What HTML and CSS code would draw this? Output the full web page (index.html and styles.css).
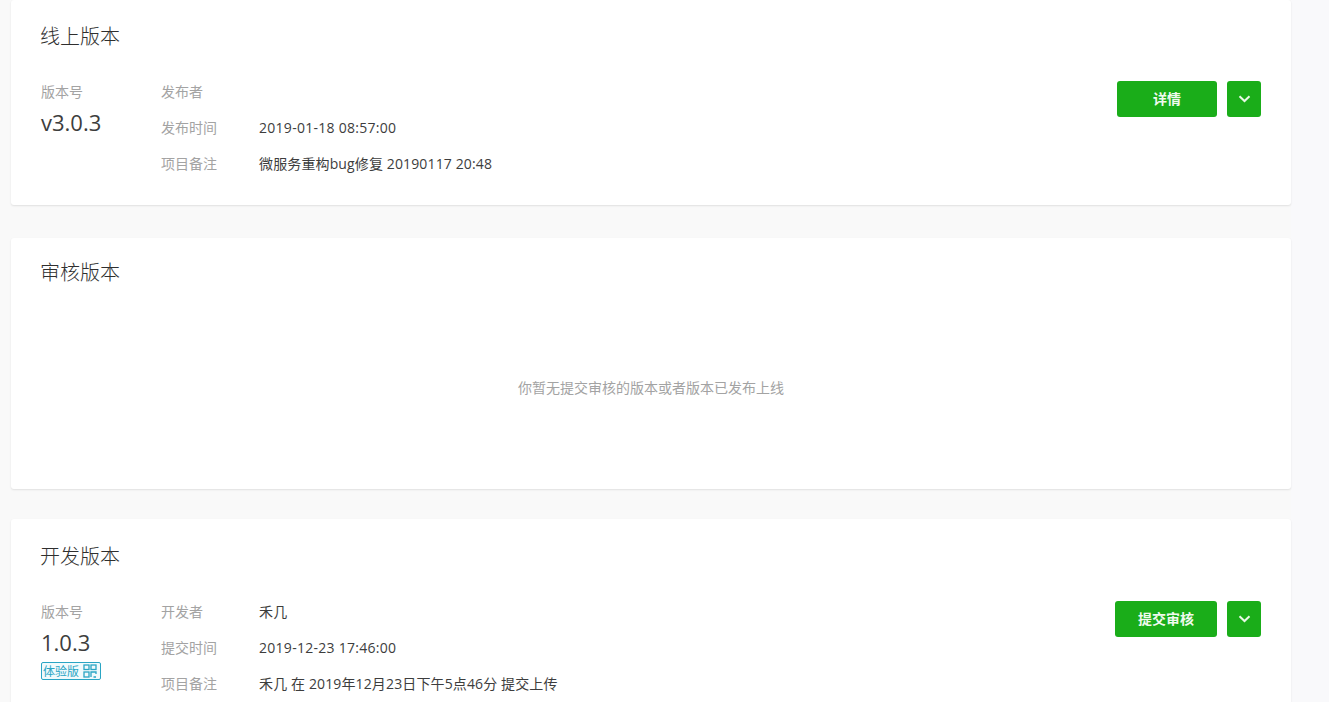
FILE: index.html
```html
<!DOCTYPE html>
<html lang="zh-CN">
<head>
    <meta charset="UTF-8">
    <meta name="viewport" content="width=device-width, initial-scale=1.0">
    <title>版本管理</title>
    <link rel="stylesheet" href="styles.css">
</head>
<body>

    <div class="page">
        <!-- 线上版本 -->
        <div class="card card-online">
            <h3 class="card-title">线上版本</h3>
            <div class="version-row">
                <div class="version-main">
                    <div class="version-label">版本号</div>
                    <div class="version-number">v3.0.3</div>
                </div>
                <div class="version-info">
                    <div class="info-row"><span class="info-label">发布者</span><span class="info-value"></span></div>
                    <div class="info-row"><span class="info-label">发布时间</span><span class="info-value info-date">2019-01-18 08:57:00</span></div>
                    <div class="info-row"><span class="info-label">项目备注</span><span class="info-value">微服务重构bug修复 20190117 20:48</span></div>
                </div>
                <div class="version-actions">
                    <button class="btn btn-main">详情</button>
                    <button class="btn btn-more" aria-label="更多">
                        <svg width="13" height="8" viewBox="0 0 13 8"><path d="M1.500 1.200 L6.500 6 L11.500 1.200" fill="none" stroke="#e8f8e6" stroke-width="2"/></svg>
                    </button>
                </div>
            </div>
        </div>

        <!-- 审核版本 -->
        <div class="card card-review">
            <h3 class="card-title">审核版本</h3>
            <p class="empty-text">你暂无提交审核的版本或者版本已发布上线</p>
        </div>

        <!-- 开发版本 -->
        <div class="card card-dev">
            <h3 class="card-title">开发版本</h3>
            <div class="version-row">
                <div class="version-main">
                    <div class="version-label">版本号</div>
                    <div class="version-number version-number-dev">1.0.3</div>
                    <span class="trial-tag">体验版
                        <svg class="qr-icon" width="14" height="14" viewBox="0 0 14 14" fill="none" stroke="#2aa5c4" stroke-width="1.300">
                            <rect x="1" y="1" width="5" height="4.500"/>
                            <rect x="8" y="1" width="5" height="4.500"/>
                            <rect x="1" y="8" width="5" height="5"/>
                            <path d="M8 13V8h5v2M10.500 13H13"/>
                        </svg>
                    </span>
                </div>
                <div class="version-info">
                    <div class="info-row"><span class="info-label">开发者</span><span class="info-value">禾几</span></div>
                    <div class="info-row"><span class="info-label">提交时间</span><span class="info-value info-date">2019-12-23 17:46:00</span></div>
                    <div class="info-row"><span class="info-label">项目备注</span><span class="info-value">禾几 在 2019年12月23日下午5点46分 提交上传</span></div>
                </div>
                <div class="version-actions">
                    <button class="btn btn-main btn-submit">提交审核</button>
                    <button class="btn btn-more" aria-label="更多">
                        <svg width="13" height="8" viewBox="0 0 13 8"><path d="M1.500 1.200 L6.500 6 L11.500 1.200" fill="none" stroke="#e8f8e6" stroke-width="2"/></svg>
                    </button>
                </div>
            </div>
        </div>
    </div>

</body>
</html>
```

FILE: styles.css
```css
/* General Page Styles */
html, body {
    height: 100%;
    overflow: hidden;
}

body {
    font-family: "Open Sans", "Noto Sans CJK SC", sans-serif;
    background-color: #f9f9fb;
    color: #3d3d3d;
    margin: 0;
    padding: 0;
}

.page {
    display: flex;
    flex-direction: column;
    width: 1280px;
    padding-left: 11px;
    background-color: #f9f9f9;
}

/* Cards */
.card {
    background-color: #fff;
    border-radius: 3px;
    box-shadow: 0 1px 2px rgba(0, 0, 0, 0.1);
    padding: 0 30px;
    box-sizing: border-box;
    flex-shrink: 0;
}

.card-online {
    height: 205px;
    padding-top: 23px;
}

.card-review {
    height: 251px;
    margin-top: 33px;
    padding-top: 21px;
}

.card-dev {
    height: 240px;
    margin-top: 30px;
    padding-top: 24px;
}

.card-title {
    font-size: 20px;
    font-weight: 300;
    line-height: 28px;
    margin: 0 0 27px -1px;
    color: #2f2f2f;
}

/* Version rows */
.version-row {
    display: flex;
}

.version-main {
    width: 120px;
}

.version-label {
    font-size: 14px;
    line-height: 28px;
    color: #a3a3a3;
}

.version-number {
    font-size: 22px;
    line-height: 34px;
    margin-top: -1px;
}

.version-number-dev {
    line-height: 32px;
    margin-top: 0;
    margin-bottom: 1px;
}

.version-info {
    flex: 1;
}

.info-row {
    display: flex;
    height: 36px;
    line-height: 28px;
    font-size: 14px;
}

.info-label {
    width: 98px;
    color: #a3a3a3;
}

.info-value {
    color: #3d3d3d;
    letter-spacing: 0.13px;
}

.info-date {
    letter-spacing: 0.28px;
}

/* Trial tag */
.trial-tag {
    display: inline-flex;
    align-items: center;
    height: 16px;
    width: 57px;
    padding-left: 1px;
    font-size: 12px;
    color: #2aa5c4;
    border: 1px solid #2aa5c4;
    border-radius: 2px;
    background-color: #f1fafc;
    white-space: nowrap;
}

.qr-icon {
    margin-left: 4px;
}

/* Buttons */
.version-actions {
    display: flex;
    gap: 10px;
    margin-top: 3px;
    height: 36px;
}

.btn {
    height: 36px;
    border: none;
    border-radius: 3px;
    background-color: #1aad19;
    color: #f0faee;
    font-family: inherit;
    font-size: 14px;
    font-weight: 700;
    cursor: pointer;
    padding: 0 0 2px;
}

.btn-main {
    width: 100px;
}

.btn-submit {
    width: 102px;
}

.btn-more {
    width: 34px;
    padding: 0;
    display: flex;
    align-items: center;
    justify-content: center;
}

/* Empty state */
.empty-text {
    margin: 91px 0 0;
    font-size: 14px;
    line-height: 20px;
    color: #a3a3a3;
    text-align: center;
}
```
